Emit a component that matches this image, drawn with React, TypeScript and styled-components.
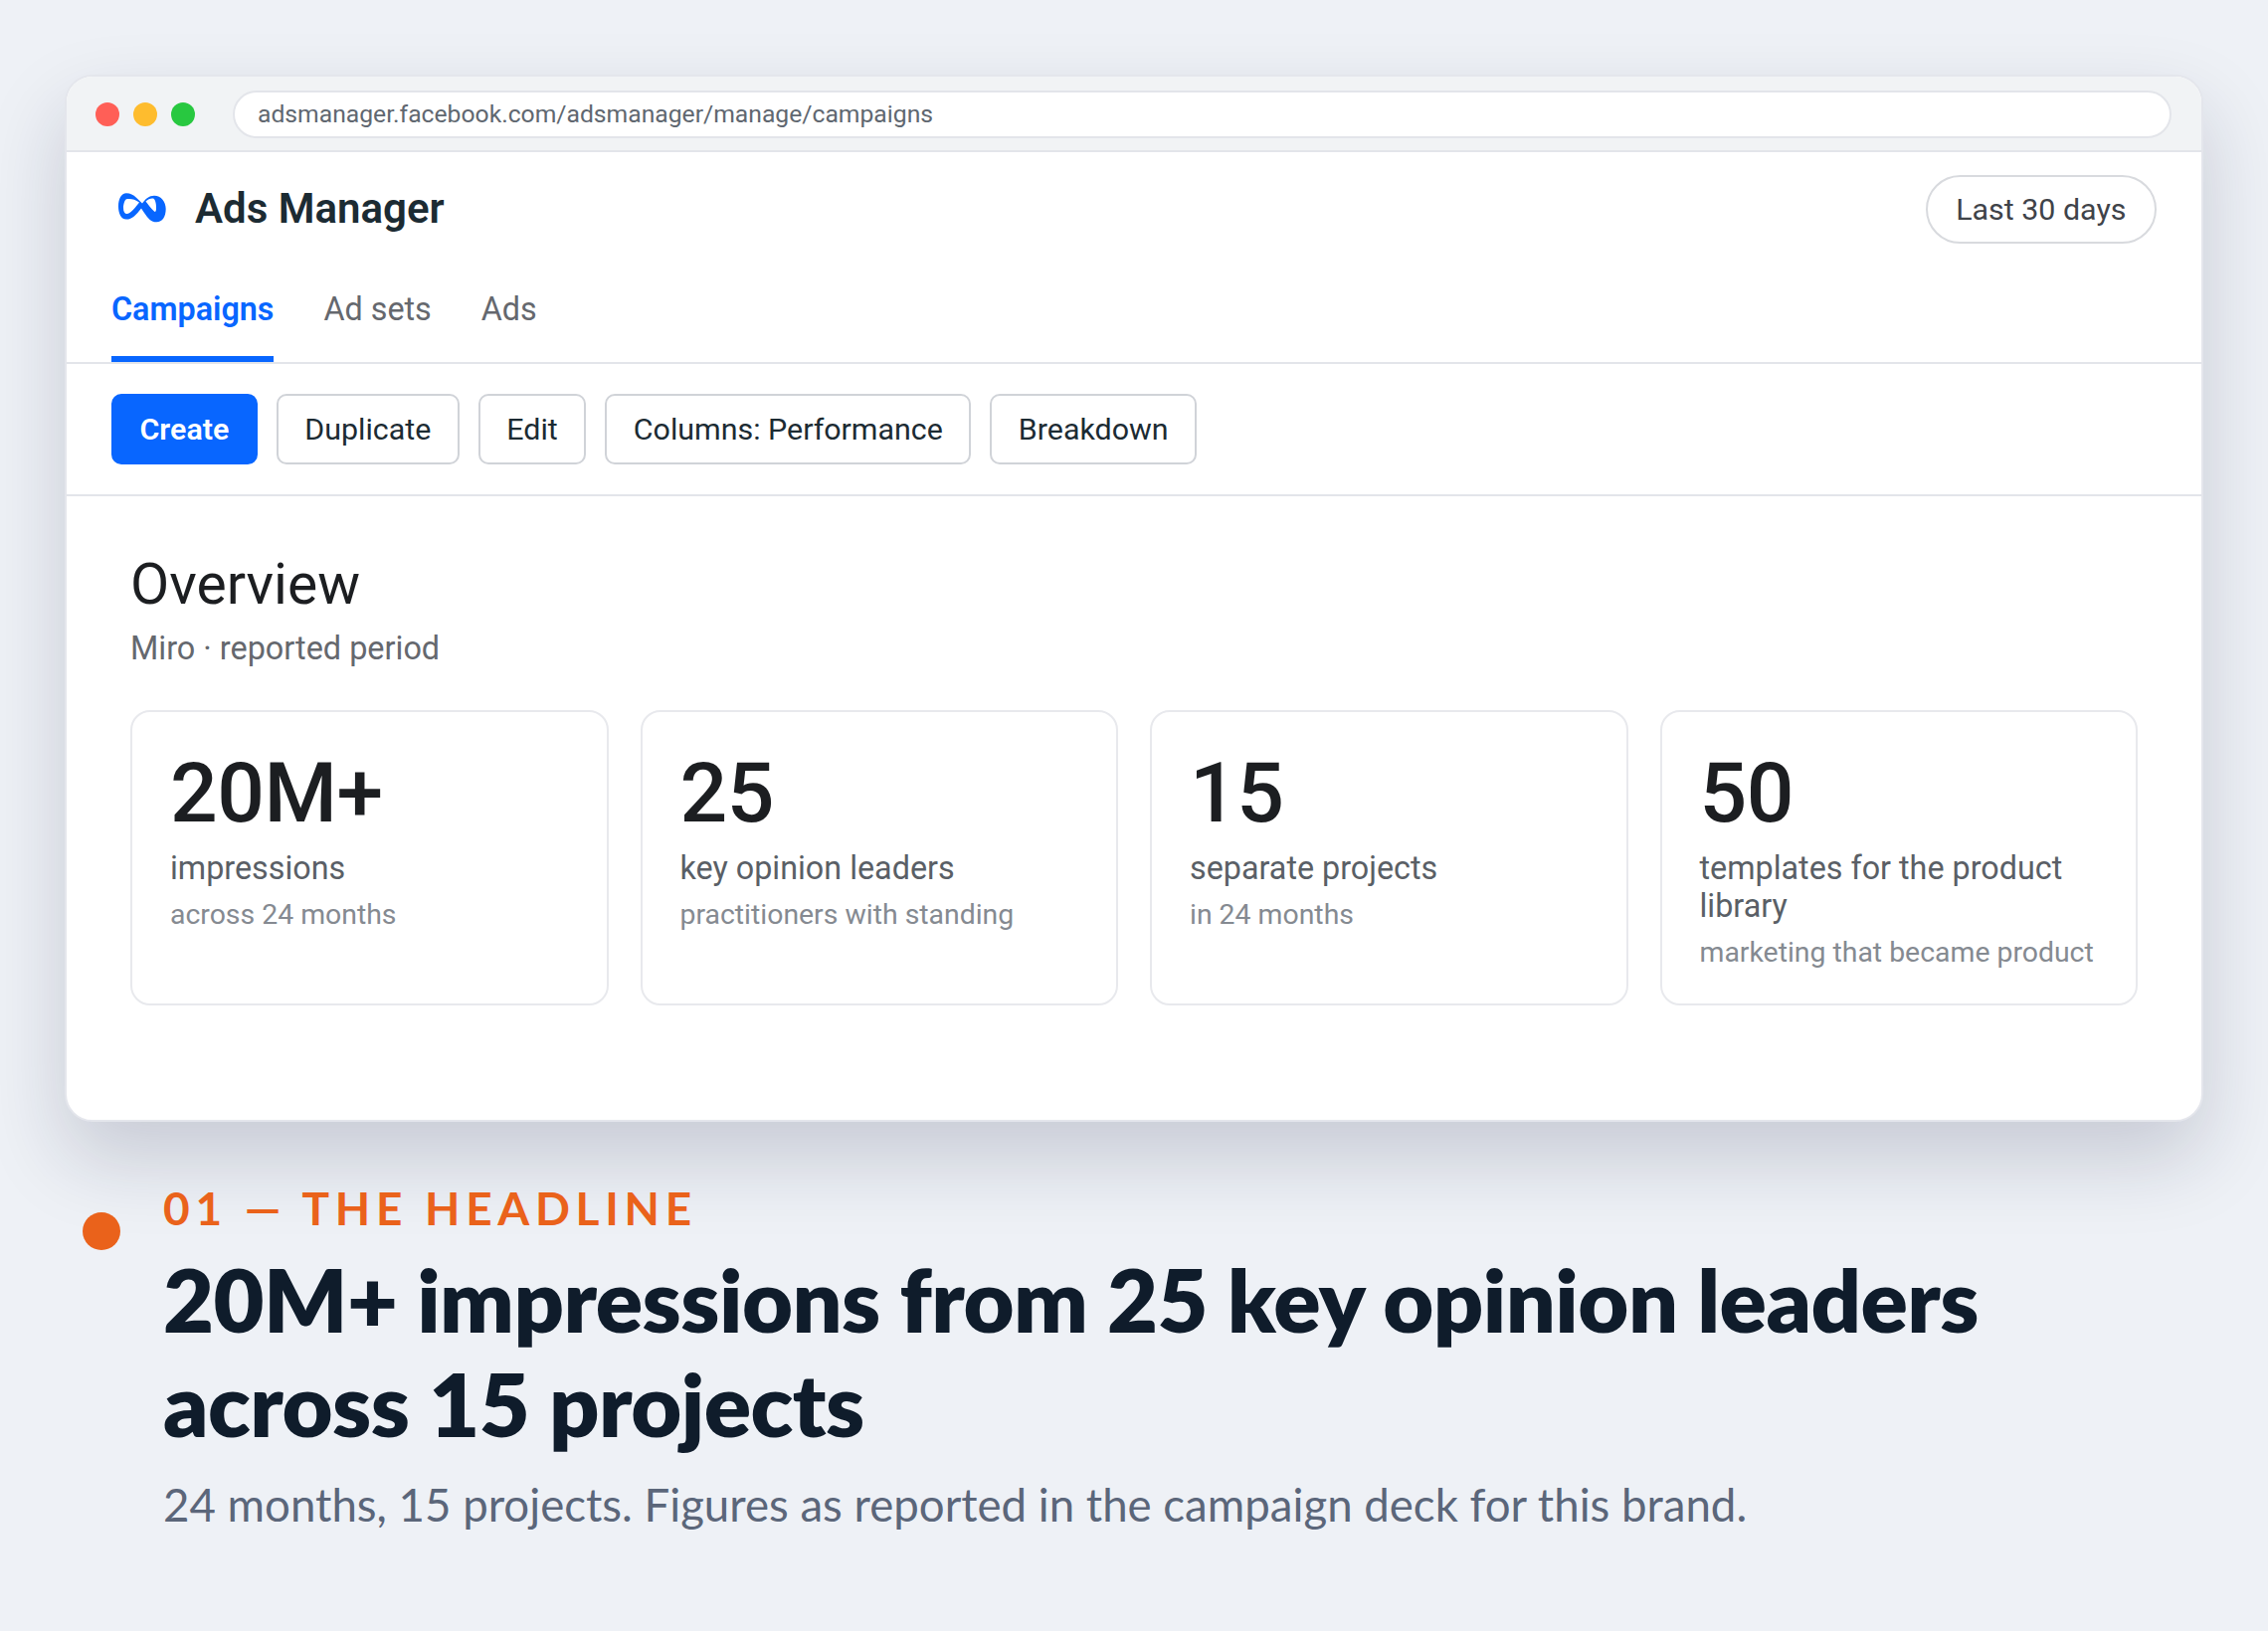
import React from 'react'
import styled, { createGlobalStyle } from 'styled-components'

const GlobalStyle = createGlobalStyle`
    html, body {
        margin: 0;
        padding: 0;
        background: #eef1f6;
    }
    * {
        box-sizing: border-box;
    }
`

const Page = styled.div`
    width: 2280px;
    height: 1640px;
    padding: 75px 65px 0;
    background: #eef1f6;
    font-family: Roboto, sans-serif;
    overflow: hidden;
`

const BrowserWindow = styled.div`
    height: 1053px;
    background: #fff;
    border: 2px solid #e4e6ec;
    border-radius: 28px;
    overflow: hidden;
    box-shadow: 0 36px 80px rgba(20, 30, 60, 0.18);
`

const ChromeBar = styled.div`
    height: 76px;
    display: flex;
    align-items: center;
    padding: 2px 30px 0 29px;
    background: #f1f3f5;
    border-bottom: 2px solid #e3e5ea;
`

const Dots = styled.div`
    display: flex;
    gap: 14px;
    margin-right: 38px;
`

const Dot = styled.span<{ $color: string }>`
    width: 24px;
    height: 24px;
    border-radius: 50%;
    background: ${p => p.$color};
`

const UrlBar = styled.div`
    flex: 1;
    height: 48px;
    display: flex;
    align-items: center;
    padding: 0 23px 2px;
    background: #fff;
    border: 2px solid #e3e5ea;
    border-radius: 24px;
    font-size: 24.7px;
    color: #606770;
`

const Header = styled.div`
    height: 213px;
    padding: 23px 45px 0;
    border-bottom: 2px solid #e3e5ea;
`

const HeaderTop = styled.div`
    display: flex;
    align-items: center;
    justify-content: space-between;
`

const Brand = styled.div`
    display: flex;
    align-items: center;
    gap: 29px;
    padding: 0 0 3px 7px;
    font-size: 42px;
    font-weight: 600;
    color: #1c2b33;
`

const RangePill = styled.div`
    height: 69px;
    display: flex;
    align-items: center;
    padding: 0 28.5px;
    border: 2px solid #d8dade;
    border-radius: 35px;
    font-size: 30.4px;
    color: #3f4349;
`

const Tabs = styled.div`
    display: flex;
    gap: 50px;
    margin-top: 42px;
`

const Tab = styled.div<{ $active?: boolean }>`
    height: 77px;
    font-size: 32.3px;
    line-height: 48px;
    font-weight: ${p => (p.$active ? 600 : 400)};
    color: ${p => (p.$active ? '#0866ff' : '#65686e')};
    border-bottom: 6px solid ${p => (p.$active ? '#0866ff' : 'transparent')};
`

const Toolbar = styled.div`
    height: 133px;
    display: flex;
    align-items: center;
    gap: 19px;
    padding: 0 45px;
    border-bottom: 2px solid #e3e5ea;
`

const ToolButton = styled.div<{ $primary?: boolean }>`
    height: 71px;
    display: flex;
    align-items: center;
    padding: 0 26.5px;
    border-radius: 10px;
    border: 2px solid ${p => (p.$primary ? '#0866ff' : '#d0d3d8')};
    background: ${p => (p.$primary ? '#0866ff' : '#fff')};
    color: ${p => (p.$primary ? '#fff' : '#1c2b33')};
    font-size: 30.4px;
    font-weight: ${p => (p.$primary ? 600 : 400)};
`

const Body = styled.div`
    padding: 56px 64px 0;
`

const Title = styled.div`
    font-size: 57px;
    line-height: 66px;
    color: #1c1e21;
`

const Subtitle = styled.div`
    margin-top: 9px;
    font-size: 32.4px;
    line-height: 44px;
    color: #65686e;
`

const Cards = styled.div`
    display: grid;
    grid-template-columns: repeat(4, 1fr);
    gap: 32px;
    margin-top: 40px;
`

const Card = styled.div`
    padding: 36px 38px 32px;
    border: 2px solid #e8e9ed;
    border-radius: 20px;
`

const Value = styled.div`
    font-size: 84px;
    line-height: 92px;
    font-weight: 500;
    letter-spacing: -0.5px;
    color: #1c1e21;
`

const Label = styled.div`
    margin-top: 10px;
    font-size: 32.3px;
    line-height: 38px;
    color: #5a5f66;
`

const Note = styled.div`
    margin-top: 9px;
    font-size: 28.4px;
    line-height: 38px;
    color: #858a91;
`

const Caption = styled.div`
    display: flex;
    margin-top: 61px;
    padding-left: 18px;
`

const Marker = styled.span`
    flex: none;
    width: 38px;
    height: 38px;
    margin: 30px 43px 0 0;
    border-radius: 50%;
    background: #ea621b;
`

const CaptionText = styled.div`
    font-family: Lato, sans-serif;
`

const Eyebrow = styled.div`
    font-size: 46px;
    line-height: 52px;
    font-weight: 700;
    letter-spacing: 5.7px;
    color: #ea621b;
`

const Headline = styled.div`
    width: 1900px;
    margin-top: 13px;
    font-size: 88px;
    line-height: 105px;
    font-weight: 800;
    letter-spacing: -0.55px;
    color: #0f1c2b;
`

const Sub = styled.div`
    margin-top: 19px;
    font-size: 45.6px;
    line-height: 60px;
    color: #5b667a;
`

const MetaLogo = () => (
    <svg width="48" height="30" viewBox="0 0 48 30">
        <path
            fill="#0866ff"
            fillRule="evenodd"
            d="M8 .3c4 0 7 1.500 10 4.500l6 5.700c3-4.500 7-7.800 12-7.800 7 0 11.700 6.300 11.700 13.300 0 8-3.700 13.300-9.200 13.300-5.500 0-8.500-3.300-12.500-9.300l-3-4.500c-5 6.500-9 11.100-15 11.100-5.500 0-8-6.600-8-13.100C0 6 3 .3 8 .3z M9 6C6.500 6 5 11 5 15c0 4 1.500 6 3.500 6 3.500 0 8.500-6 12.500-11.500C17 6.500 13 5.500 9 6z M27.500 8.500C30 6 33 5 35 5.500c2.500 1 3.200 6.500 3 10.500-.1 2.500-1 3.500-2 2.500-3-2.500-6-7-8.500-10z"
        />
    </svg>
)

const stats = [
    { value: '20M+', label: 'impressions', note: 'across 24 months' },
    { value: '25', label: 'key opinion leaders', note: 'practitioners with standing' },
    { value: '15', label: 'separate projects', note: 'in 24 months' },
    { value: '50', label: 'templates for the product library', note: 'marketing that became product' },
]

const App = () => {
    return (
        <Page>
            <GlobalStyle />
            <BrowserWindow>
                <ChromeBar>
                    <Dots>
                        <Dot $color="#ff5f57" />
                        <Dot $color="#febc2e" />
                        <Dot $color="#28c840" />
                    </Dots>
                    <UrlBar>adsmanager.facebook.com/adsmanager/manage/campaigns</UrlBar>
                </ChromeBar>
                <Header>
                    <HeaderTop>
                        <Brand>
                            <MetaLogo />
                            Ads Manager
                        </Brand>
                        <RangePill>Last 30 days</RangePill>
                    </HeaderTop>
                    <Tabs>
                        <Tab $active>Campaigns</Tab>
                        <Tab>Ad sets</Tab>
                        <Tab>Ads</Tab>
                    </Tabs>
                </Header>
                <Toolbar>
                    <ToolButton $primary>Create</ToolButton>
                    <ToolButton>Duplicate</ToolButton>
                    <ToolButton>Edit</ToolButton>
                    <ToolButton>Columns: Performance</ToolButton>
                    <ToolButton>Breakdown</ToolButton>
                </Toolbar>
                <Body>
                    <Title>Overview</Title>
                    <Subtitle>Miro · reported period</Subtitle>
                    <Cards>
                        {stats.map(s => (
                            <Card key={s.value}>
                                <Value>{s.value}</Value>
                                <Label>{s.label}</Label>
                                <Note>{s.note}</Note>
                            </Card>
                        ))}
                    </Cards>
                </Body>
            </BrowserWindow>
            <Caption>
                <Marker />
                <CaptionText>
                    <Eyebrow>01 — THE HEADLINE</Eyebrow>
                    <Headline>20M+ impressions from 25 key opinion leaders across 15 projects</Headline>
                    <Sub>24 months, 15 projects. Figures as reported in the campaign deck for this brand.</Sub>
                </CaptionText>
            </Caption>
        </Page>
    )
}

export default App
